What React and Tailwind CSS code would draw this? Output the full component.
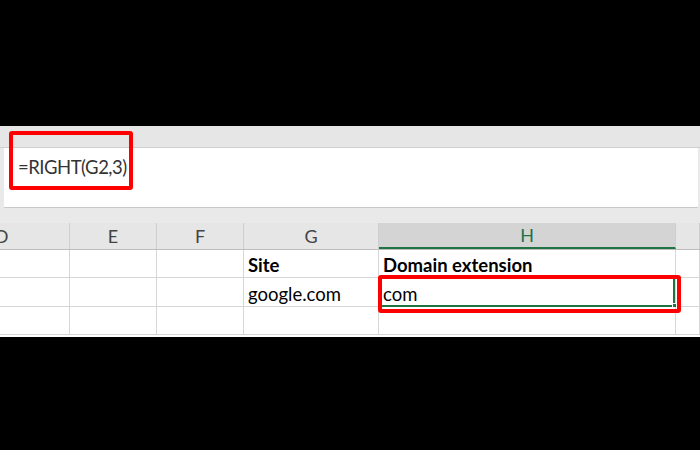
const cols = [
  { key: 'D', w: 'w-[70px]' },
  { key: 'E', w: 'w-[87px]' },
  { key: 'F', w: 'w-[87px]' },
  { key: 'G', w: 'w-[135px]' },
  { key: 'H', w: 'w-[297px]' },
  { key: 'I', w: 'flex-1' },
]

const rows = [
  { G: 'Site', H: 'Domain extension', bold: true, h: 'h-[28px]' },
  { G: 'google.com', H: 'com', h: 'h-[29px]', selected: 'H' },
  { h: 'h-[28px]' },
]

export default function App() {
  return (
    <div className="w-[700px] h-[450px] bg-black overflow-hidden" style={{ fontFamily: 'Lato, "Open Sans", sans-serif' }}>
      <div className="h-[126px]" />

      <div className="relative h-[211px] bg-[#e9e9e9] flex flex-col">
        {/* ribbon strip */}
        <div className="h-[22px] bg-[#e6e6e6] border-b border-[#cfcfcf]" />

        {/* formula bar */}
        <div className="h-[60px] ml-[4px] mr-[2px] bg-white border-b border-[#c9c9c9] pl-[14px] pt-[8px]">
          <span className="text-[18.5px] leading-none tracking-[-0.5px] text-[#333]">=RIGHT(G2,3)</span>
        </div>

        <div className="h-[15px]" />

        {/* column headers */}
        <div className="h-[27px] flex border-b border-[#bdbdbd] bg-[#e6e6e6]">
          {cols.map((c) => (
            <div
              key={c.key}
              className={`${c.w} flex items-center justify-center text-[18px] border-r border-[#cfcfcf] ${
                c.key === 'H'
                  ? 'bg-[#d4d4d4] text-[#217346] border-b-2 border-b-[#217346]'
                  : 'text-[#444]'
              }`}
            >
              {c.key === 'D' ? <span className="-ml-[66px]">D</span> : c.key === 'I' ? '' : c.key}
            </div>
          ))}
        </div>

        {/* grid */}
        <div className="bg-white flex flex-col">
          {rows.map((r, i) => (
            <div key={i} className={`${r.h} flex border-b border-[#d6d6d6]`}>
              {cols.map((c) => (
                <div
                  key={c.key}
                  className={`${c.w} relative flex items-end pl-[4px] border-r border-[#d6d6d6] text-[18.5px] leading-none text-black ${
                    r.bold ? 'font-bold' : ''
                  }`}
                >
                  <span className="pb-[3px]">{r[c.key]}</span>
                  {r.selected === c.key && (
                    <>
                      <div className="absolute inset-0 -bottom-px border-b-2 border-r-2 border-[#217346]" />
                      <div className="absolute -right-[2px] -bottom-[2px] w-[5px] h-[5px] bg-[#217346] border border-white" />
                    </>
                  )}
                </div>
              ))}
            </div>
          ))}
        </div>

        <div className="flex-1 bg-white" />

        {/* annotation boxes */}
        <div className="absolute left-[9px] top-[5px] w-[124px] h-[59px] border-[4px] border-[#ff0000] rounded-[3px]" />
        <div className="absolute left-[378px] top-[149px] w-[303px] h-[38px] border-[4px] border-[#ff0000] rounded-[3px]" />
      </div>
    </div>
  )
}
